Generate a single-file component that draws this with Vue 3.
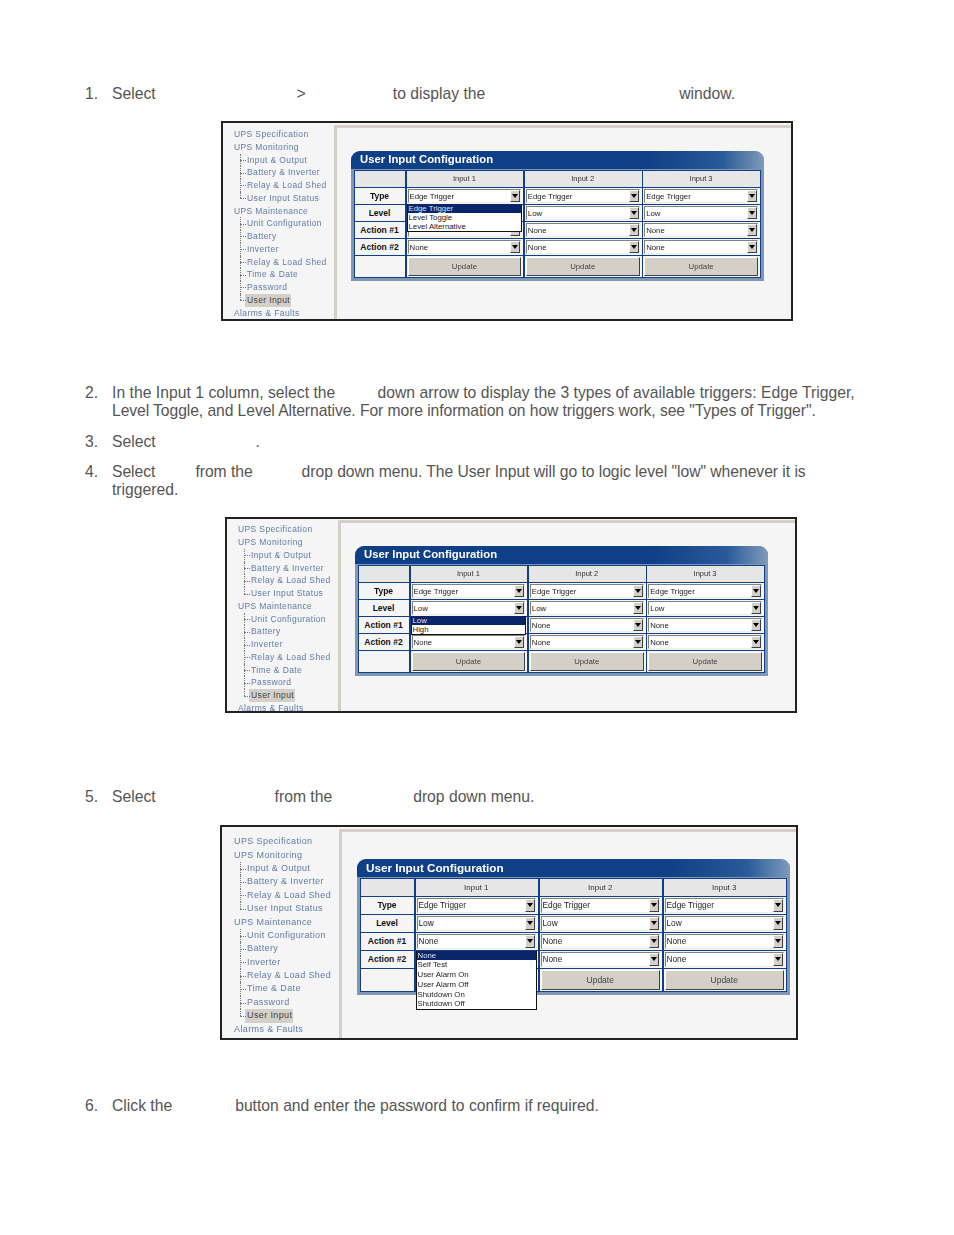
<script setup>
// number = blank space where the manual's bold word was left out
const tree = [
  { label: "UPS Specification" },
  { label: "UPS Monitoring" },
  { label: "Input & Output", child: true },
  { label: "Battery & Inverter", child: true },
  { label: "Relay & Load Shed", child: true },
  { label: "User Input Status", child: true, last: true },
  { label: "UPS Maintenance" },
  { label: "Unit Configuration", child: true },
  { label: "Battery", child: true },
  { label: "Inverter", child: true },
  { label: "Relay & Load Shed", child: true },
  { label: "Time & Date", child: true },
  { label: "Password", child: true },
  { label: "User Input", child: true, last: true, active: true },
  { label: "Alarms & Faults" },
];

const rows = [
  { label: "Type", value: "Edge Trigger" },
  { label: "Level", value: "Low" },
  { label: "Action #1", value: "None" },
  { label: "Action #2", value: "None" },
];

const blocks = [
  { id: 1, cls: "step-1", num: "1.", lines: [["Select", 141, ">", 87, "to display the", 194, "window."]] },
  { id: 2, shot: "shot-a", openRow: 0, covered: [1, 2], options: ["Edge Trigger", "Level Toggle", "Level Alternative"] },
  {
    id: 3,
    cls: "step-2",
    num: "2.",
    lines: [
      ["In the Input 1 column, select the", 42, "down arrow to display the 3 types of available triggers: Edge Trigger,"],
      ['Level Toggle, and Level Alternative. For more information on how triggers work, see "Types of Trigger".'],
    ],
    tracks: [0.03, -0.08],
  },
  { id: 4, cls: "step-3", num: "3.", lines: [["Select", 100, "."]] },
  {
    id: 5,
    cls: "step-4",
    num: "4.",
    lines: [
      ["Select", 40, "from the", 49, 'drop down menu. The User Input will go to logic level "low" whenever it is'],
      ["triggered."],
    ],
    tracks: [-0.04, 0],
  },
  { id: 6, shot: "shot-b", openRow: 1, covered: [2], options: ["Low", "High"] },
  { id: 7, cls: "step-5", num: "5.", lines: [["Select", 119, "from the", 81, "drop down menu."]] },
  {
    id: 8,
    shot: "shot-c",
    openRow: 2,
    covered: [3],
    coverUpdate: true,
    options: ["None", "Self Test", "User Alarm On", "User Alarm Off", "Shutdown On", "Shutdown Off"],
  },
  { id: 9, cls: "step-6", num: "6.", lines: [["Click the", 63, "button and enter the password to confirm if required."]] },
];

const lineStyle = (block, l) => (block.tracks ? { letterSpacing: block.tracks[l] + "px" } : null);
</script>

<template>
  <main class="page">
    <template v-for="block in blocks" :key="block.id">
      <div v-if="block.shot" class="shot" :class="block.shot">
        <ul class="tree">
          <li
            v-for="(item, i) in tree"
            :key="i"
            class="tree-item"
            :class="{ child: item.child, last: item.last, active: item.active }"
          >
            <span>{{ item.label }}</span>
          </li>
        </ul>
        <div class="main">
          <div class="panel">
            <div class="panel-title">User Input Configuration</div>
            <div class="grid">
              <div class="cell head"></div>
              <div v-for="n in 3" :key="n" class="cell head">Input {{ n }}</div>
              <template v-for="(row, r) in rows" :key="row.label">
                <div class="cell label">{{ row.label }}</div>
                <div v-for="n in 3" :key="n" class="cell">
                  <div class="select">
                    <span class="select-value">{{ n === 1 && block.covered.includes(r) ? "" : row.value }}</span>
                    <span class="select-arrow"></span>
                  </div>
                  <ul v-if="n === 1 && r === block.openRow" class="dropdown">
                    <li v-for="(opt, o) in block.options" :key="opt" :class="{ selected: o === 0 }">{{ opt }}</li>
                  </ul>
                </div>
              </template>
              <div class="cell"></div>
              <div v-for="n in 3" :key="n" class="cell">
                <button class="update">{{ n === 1 && block.coverUpdate ? "" : "Update" }}</button>
              </div>
            </div>
          </div>
        </div>
      </div>
      <div v-else class="step" :class="block.cls">
        <span class="num">{{ block.num }}</span>
        <div>
          <div v-for="(line, l) in block.lines" :key="l" class="line" :style="lineStyle(block, l)">
            <template v-for="(part, p) in line" :key="p">
              <span v-if="typeof part === 'number'" class="blank" :style="{ width: part + 'px' }"></span>
              <span v-else>{{ part }}</span>
            </template>
          </div>
        </div>
      </div>
    </template>
  </main>
</template>

<style scoped>
.page {
  width: 954px;
  height: 1235px;
  box-sizing: border-box;
  padding-top: 85px;
  overflow: hidden;
  background: #fff;
  font-family: "Liberation Sans", Arial, sans-serif;
  color: #555;
  font-size: 15.7px;
}

.step {
  display: flex;
  margin-left: 85px;
  line-height: 18px;
}
.num {
  width: 27px;
}
.line {
  white-space: nowrap;
}
.blank {
  display: inline-block;
}
.step-2 {
  margin-top: 63px;
}
.step-3 {
  margin-top: 13px;
}
.step-4 {
  margin-top: 12px;
}
.step-5 {
  margin-top: 75px;
}
.step-6 {
  margin-top: 57px;
}

/* screenshots */
.shot {
  display: flex;
  box-sizing: border-box;
  border: 2px solid #222;
  background: #f5f5f5;
  overflow: hidden;
  font-family: "Liberation Sans", Arial, sans-serif;
}
.shot-a,
.shot-b {
  --side: 111px;
  --pitch: 12.75px;
  --label: 50px;
  --row: 15.5px;
  --btn: 21px;
  --title: 18px;
  --title-size: 11.3px;
  --tree-size: 8.5px;
  --tree-track: 0.38px;
  --tree-left: 11px;
  --panel-width: 413px;
  --panel-left: 14px;
  --panel-top: 23px;
  --opt: 9.2px;
  --drop-top: 0px;
  --cell-size: 7.8px;
  --head-size: 7.5px;
  --btn-size: 7.8px;
  --opt-size: 7.8px;
  --sel: 14px;
  width: 572px;
}
.shot-a {
  height: 200px;
  margin: 18px 0 0 221px;
  --tree-top: 5.1px;
  --main-top: 2px;
}
.shot-b {
  height: 196px;
  margin: 18px 0 0 225px;
  --tree-top: 4.4px;
  --main-top: 1px;
}
.shot-c {
  --side: 117px;
  --pitch: 13.4px;
  --label: 53px;
  --row: 16.5px;
  --btn: 22px;
  --title: 18px;
  --title-size: 11.7px;
  --tree-size: 9px;
  --tree-track: 0.38px;
  --tree-left: 12px;
  --tree-top: 8.2px;
  --main-top: 2px;
  --panel-width: 433px;
  --panel-left: 15px;
  --panel-top: 27px;
  --opt: 9.8px;
  --drop-top: 1px;
  --cell-size: 8.3px;
  --head-size: 8px;
  --btn-size: 8.5px;
  --opt-size: 7.8px;
  --sel: 15px;
  width: 578px;
  height: 215px;
  margin: 19px 0 0 220px;
}

.tree {
  flex: none;
  width: var(--side);
  box-sizing: border-box;
  margin: 0;
  padding: var(--tree-top) 0 0 var(--tree-left);
  list-style: none;
  font-size: var(--tree-size);
  letter-spacing: var(--tree-track);
  color: #5f7ba6;
  filter: blur(0.3px);
}
.tree-item {
  position: relative;
  height: var(--pitch);
  line-height: var(--pitch);
  white-space: nowrap;
}
.tree-item.child {
  padding-left: 13px;
}
.tree-item.child::before {
  content: "";
  position: absolute;
  left: 6px;
  top: 50%;
  width: 6px;
  border-top: 1px dotted #777;
}
.tree-item.child::after {
  content: "";
  position: absolute;
  left: 6px;
  top: 0;
  bottom: 0;
  border-left: 1px dotted #777;
}
.tree-item.last::after {
  bottom: 50%;
}
.tree-item.active span {
  display: inline-block;
  padding: 0 1px 0 2px;
  margin-left: -2px;
  background: #d4d0c8;
  color: #444;
}

.main {
  flex: 1;
  margin-top: var(--main-top);
  padding: var(--panel-top) 0 0 var(--panel-left);
  border-top: 3px solid #d4d0c8;
  border-left: 3px solid #d4d0c8;
  filter: blur(0.25px);
}
.panel {
  width: var(--panel-width);
  box-sizing: border-box;
  padding: 0 3px 3px;
  background: #7f97b5;
  border-radius: 9px 9px 0 0;
}
.panel-title {
  height: var(--title);
  line-height: calc(var(--title) - 1px);
  margin: 0 -3px;
  padding-left: 9px;
  border-radius: 9px 9px 0 0;
  background: linear-gradient(90deg, #0f3f86 72%, #2a5a98 90%, #7f9abb 100%);
  color: #fff;
  font-size: var(--title-size);
  font-weight: bold;
}
.grid {
  display: grid;
  grid-template-columns: var(--label) repeat(3, 1fr);
  grid-template-rows: repeat(5, var(--row)) var(--btn);
  gap: 1.5px;
  margin-top: 1px;
  border: 1px solid #0f3f86;
  background: #0f3f86;
}
.cell {
  position: relative;
  display: flex;
  align-items: center;
  justify-content: center;
  box-sizing: border-box;
  padding: 1px 2px 1px 1px;
  background: #f5f5f5;
  font-size: var(--cell-size);
  color: #222;
}
.head {
  background: #e6e6e6;
  color: #333;
  font-size: var(--head-size);
}
.label {
  font-size: 8.5px;
  font-weight: bold;
  color: #111;
}
.select {
  display: flex;
  flex: 1;
  align-items: stretch;
  height: var(--sel);
  box-sizing: border-box;
  border: 1px solid;
  border-color: #808080 #eee #eee #808080;
  background: #fff;
}
.select-value {
  flex: 1;
  padding-left: 1px;
  line-height: 13px;
  overflow: hidden;
  white-space: nowrap;
  color: #222;
}
.select-arrow {
  position: relative;
  width: 10px;
  background: #d4d0c8;
  border: 1px solid;
  border-color: #fff #404040 #404040 #fff;
  box-sizing: border-box;
}
.select-arrow::after {
  content: "";
  position: absolute;
  left: 1px;
  top: 3px;
  border: 3px solid transparent;
  border-top: 4px solid #000;
  border-bottom: 0;
}
.dropdown {
  position: absolute;
  z-index: 2;
  left: 0;
  right: 1px;
  top: calc(100% + var(--drop-top));
  margin: 0;
  padding: 0;
  list-style: none;
  background: #fff;
  border: 1px solid #111;
  border-top: 0;
  font-size: var(--opt-size);
  color: #222;
}
.dropdown li {
  height: var(--opt);
  line-height: var(--opt);
  padding-left: 1px;
  white-space: nowrap;
}
.dropdown .selected {
  background: #0a246a;
  color: #dfe4f0;
}
.update {
  flex: 1;
  align-self: stretch;
  padding: 0;
  border: 1px solid;
  border-color: #fff #404040 #404040 #fff;
  background: #d4d0c8;
  font-family: inherit;
  font-size: var(--btn-size);
  color: #444;
}
</style>

<style>
html,
body {
  background: #fff;
}
</style>
